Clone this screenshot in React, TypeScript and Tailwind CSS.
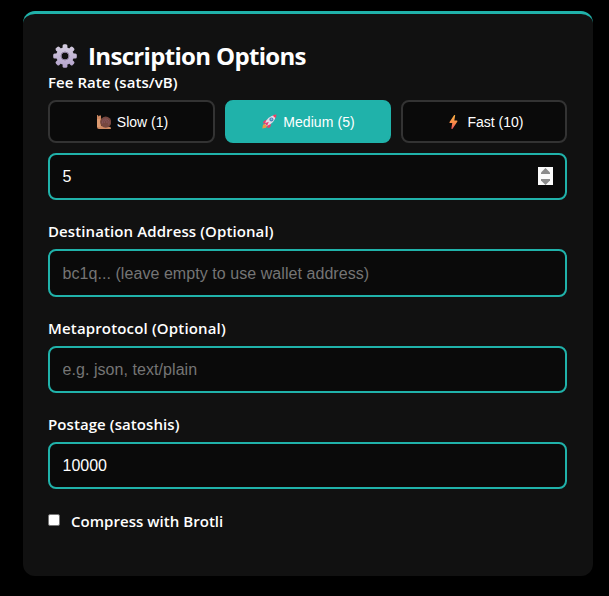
import type { ReactNode } from "react";

function Gear() {
  const teeth = [0, 45, 90, 135, 180, 225, 270, 315];
  return (
    <svg viewBox="0 0 24 24" className="h-6 w-6 shrink-0">
      <defs>
        <linearGradient id="gear" x1="0" y1="0" x2="0" y2="1">
          <stop offset="0" stopColor="#d6cfe0" />
          <stop offset="1" stopColor="#b3a1cb" />
        </linearGradient>
        <mask id="gearMask">
          <g fill="#fff">
            <circle cx="12" cy="12" r="8.8" />
            {teeth.map((a) => (
              <rect key={a} x="9.6" y="0.2" width="4.8" height="6" rx="1.5" transform={`rotate(${a} 12 12)`} />
            ))}
          </g>
          <circle cx="12" cy="12" r="3.5" fill="#000" />
        </mask>
      </defs>
      <rect width="24" height="24" fill="url(#gear)" mask="url(#gearMask)" />
      <circle cx="12" cy="12" r="4" fill="none" stroke="#8c7d9c" strokeWidth="1" />
    </svg>
  );
}

function Snail() {
  return (
    <svg viewBox="0 0 14 14" className="h-[14px] w-[14px] shrink-0">
      <path d="M0 0.2 L1 0 L1.5 1.5 L3 0.2 L4 0.8 L4 10.5 L13.5 12 L14 14 H2 Q0 14 0 12 Z" fill="#cf8962" />
      <path d="M0 4h3.6v8H0z" fill="#dc9a70" />
      <circle cx="8.7" cy="7.1" r="5.6" fill="#76473f" />
      <path d="M5.5 8.5a3.4 3.4 0 1 1 5.8 1.1M7.5 8a1.5 1.5 0 1 1 2.2 0" fill="none" stroke="#87555c" strokeWidth="1" />
    </svg>
  );
}

function Rocket() {
  return (
    <svg viewBox="0 0 15 15" className="h-[15px] w-[15px] shrink-0">
      <path d="M0.3 14.6 1 10.7 3.2 9.8 5.2 11.7 4 13.8Z" fill="#ed9844" />
      <path d="M4.8 5.6 1.7 7 0.9 9.6 4.3 9Z M9.3 10.2 8 13.4 5.2 14 5.8 10.8Z" fill="#ef3b6d" />
      <path d="M3 10.2Q4.2 2.4 14 0.7Q13 8.9 4.8 12Z" fill="#e3dce8" />
      <path d="M10.7 1.5Q12.4.5 14.4.5Q14.4 2.6 13.5 4.2Z" fill="#ee3e61" />
      <path d="M2.6 9.2 6.8 7.8 5.1 12Z" fill="#e83f74" />
      <circle cx="9.4" cy="5.4" r="2" fill="#5183b9" />
      <circle cx="9.5" cy="5.2" r="0.9" fill="#86b7df" />
    </svg>
  );
}

function Bolt() {
  return (
    <svg viewBox="0 0 9 14" className="h-[14px] w-[9px] shrink-0">
      <defs>
        <linearGradient id="bolt" x1="0" y1="0" x2="0" y2="1">
          <stop offset="0" stopColor="#fbb343" />
          <stop offset="0.55" stopColor="#f98a48" />
          <stop offset="1" stopColor="#e94f5b" />
        </linearGradient>
      </defs>
      <path d="M5.2 0 0.4 7.2Q0.2 8 1 8H3.3L2.3 13.7 3.4 14 8.4 6.5Q8.6 5.6 7.8 5.6H5.3L6.2 0.3Z" fill="url(#bolt)" />
    </svg>
  );
}

const labelFont = "font-['Open_Sans','Noto_Sans',sans-serif] text-[15px] font-semibold whitespace-nowrap";
const box =
  "block w-full rounded-lg border-2 border-[#20b2aa] bg-[#0a0a0a] pl-[12.5px] pr-3 text-[16px] text-white placeholder:text-[#757575] outline-none";

function Field({ label, tracking, children }: { label: string; tracking: string; children: ReactNode }) {
  return (
    <div className="mb-[21px] h-[75.5px]">
      <div className={`${labelFont} ${tracking} mb-2 h-5 leading-5`}>{label}</div>
      {children}
    </div>
  );
}

const feeBox = "flex h-[43px] items-center justify-center rounded-lg border-2 text-[14px]";

export default function App() {
  return (
    <div className="h-[596px] overflow-hidden bg-black pl-[23px] pr-4 pt-[11px] font-['Liberation_Sans',Arial,sans-serif] text-white">
      <main className="h-[565px] rounded-xl border-t-[3px] border-[#20b2aa] bg-[#111111] pl-[25px] pr-[26px] pt-[26px]">
        <h1 className="flex h-8 items-center pl-[5px] font-['Open_Sans','Noto_Sans',sans-serif] text-[24px] leading-8 font-bold">
          <Gear />
          <span className="ml-[11px] whitespace-nowrap tracking-[-0.67px]">Inscription Options</span>
        </h1>
        <div className={`${labelFont} h-5 leading-5 tracking-[0.06px]`}>Fee Rate (sats/vB)</div>
        <div className="mt-2 grid grid-cols-[167px_166px_166px] gap-[10px]">
          <button className={`${feeBox} border-[#333333] bg-[#0a0a0a] pl-[2px]`}>
            <Snail />
            <span className="ml-[6px] pt-px">Slow (1)</span>
          </button>
          <button className={`${feeBox} border-[#20b2aa] bg-[#20b2aa] pl-px`}>
            <Rocket />
            <span className="ml-[6px] pt-px tracking-[0.08px]">Medium (5)</span>
          </button>
          <button className={`${feeBox} border-[#333333] bg-[#0a0a0a] pl-[5px]`}>
            <Bolt />
            <span className="ml-[9px] pt-px">Fast (10)</span>
          </button>
        </div>
        <div className={`${box} mt-[10px] mb-[21px] flex h-[47px] items-center justify-between`}>
          <span>5</span>
          <span className="mb-px flex h-[18px] w-[15px] flex-col items-center justify-between bg-[#fbfbfb]">
            <svg viewBox="0 0 9 6" className="mt-px h-[6px] w-[9px]">
              <path d="M4.5 0 9 4.5V6H0V4.5Z" fill="#8b8b8b" />
            </svg>
            <svg viewBox="0 0 9 6" className="h-[6px] w-[9px]">
              <path d="M4.5 6 9 1.5V0H0V1.5Z" fill="#8b8b8b" />
            </svg>
          </span>
        </div>
        <Field label="Destination Address (Optional)" tracking="tracking-[0.1px]">
          <input
            className={`${box} h-[47.5px] pt-[2px] tracking-[0.06px]`}
            placeholder="bc1q... (leave empty to use wallet address)"
          />
        </Field>
        <Field label="Metaprotocol (Optional)" tracking="tracking-[0.16px]">
          <input className={`${box} h-[47px] pt-[2px] tracking-[0.06px]`} placeholder="e.g. json, text/plain" />
        </Field>
        <Field label="Postage (satoshis)" tracking="tracking-[0.08px]">
          <input className={`${box} h-[47px]`} defaultValue="10000" />
        </Field>
        <label className={`${labelFont} flex h-5 items-center leading-5 tracking-[0.04px]`}>
          <span className="-mt-[2px] mr-[11px] h-3 w-3 rounded-[2px] border border-[#767676] bg-white" />
          Compress with Brotli
        </label>
      </main>
    </div>
  );
}
